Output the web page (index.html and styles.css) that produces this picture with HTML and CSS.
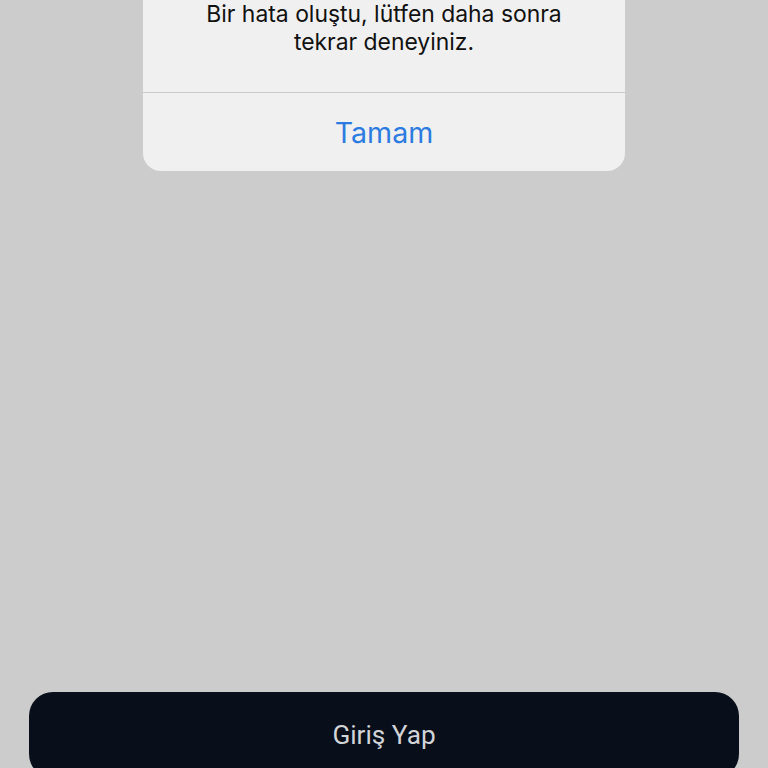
FILE: index.html
```html
<!DOCTYPE html>
<html lang="tr">
<head>
<meta charset="utf-8">
<link rel="stylesheet" href="styles.css">
</head>
<body>
<div class="screen">
  <div class="alert">
    <div class="alert-message">Bir hata oluştu, lütfen daha sonra<br>tekrar deneyiniz.</div>
    <div class="alert-action">Tamam</div>
  </div>
  <div class="login-button">Giriş Yap</div>
</div>
</body>
</html>
```

FILE: styles.css
```css
html, body {
  margin: 0;
  padding: 0;
  background: #cccccc;
}
.screen {
  width: 768px;
  height: 768px;
  overflow: hidden;
  display: flex;
  flex-direction: column;
  align-items: center;
  background: #cccccc;
}
.alert {
  width: 482px;
  background: #f0f0f0;
  border-radius: 0 0 18px 18px;
  display: flex;
  flex-direction: column;
}
.alert-message {
  height: 93px;
  box-sizing: border-box;
  border-bottom: 1px solid #c9c9c9;
  text-align: center;
  font-family: Inter, "Noto Sans", sans-serif;
  font-size: 22.9px;
  line-height: 28px;
  color: #111111;
}
.alert-action {
  height: 78px;
  display: flex;
  align-items: center;
  justify-content: center;
  font-family: Inter, "Noto Sans", sans-serif;
  font-size: 28.6px;
  color: #2c7be0;
}
.login-button {
  margin-top: 521px;
  width: 710px;
  height: 86px;
  flex-shrink: 0;
  background: #080e1a;
  border-radius: 24px;
  display: flex;
  align-items: center;
  justify-content: center;
  box-sizing: border-box;
  font-family: Roboto, sans-serif;
  font-size: 26.2px;
  color: #d2d4d8;
}
```
